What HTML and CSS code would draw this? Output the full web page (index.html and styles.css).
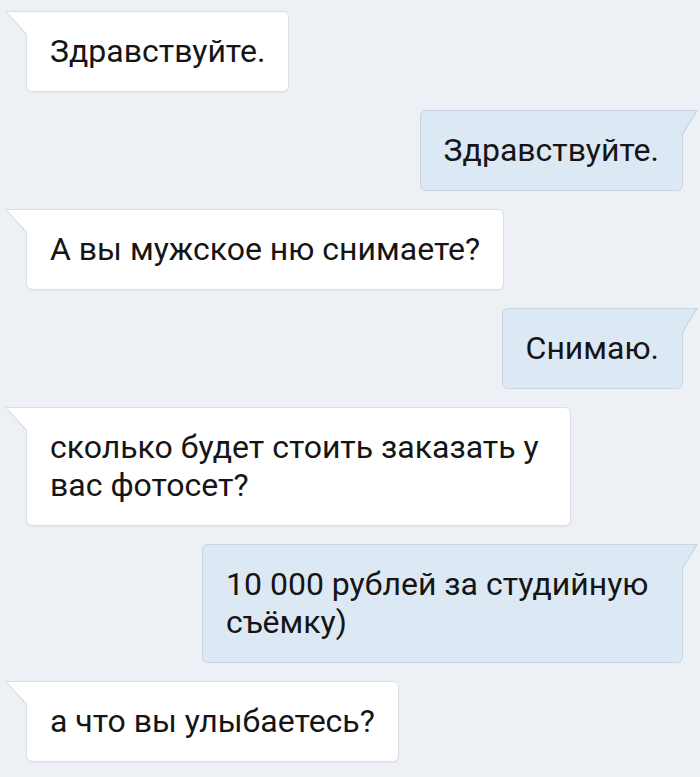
FILE: index.html
```html
<!DOCTYPE html>
<html lang="ru">
<head>
<meta charset="utf-8">
<link rel="stylesheet" href="styles.css">
</head>
<body>
<main class="chat">
  <div class="msg in">Здравствуйте.</div>
  <div class="msg out">Здравствуйте.</div>
  <div class="msg in">А вы мужское ню снимаете?</div>
  <div class="msg out">Снимаю.</div>
  <div class="msg in">сколько будет стоить заказать у вас фотосет?</div>
  <div class="msg out">10 000 рублей за студийную съёмку)</div>
  <div class="msg in">а что вы улыбаетесь?</div>
</main>
</body>
</html>
```
FILE: styles.css
```css
html, body {
  margin: 0;
  padding: 0;
  background: #edf0f4;
}
body {
  width: 700px;
  height: 777px;
  overflow: hidden;
  font-family: Roboto, "Noto Sans", sans-serif;
}
.chat {
  display: flex;
  flex-direction: column;
  gap: 18px;
  padding: 11px 17px 0 26px;
}
.msg {
  position: relative;
  box-sizing: border-box;
  padding: 20px 23px 21px 23px;
  font-size: 32px;
  line-height: 38px;
  color: #151515;
  border: 1px solid #d9dee5;
  border-radius: 6px;
  width: fit-content;
}
.msg.in {
  align-self: flex-start;
  background: #ffffff;
  border-top-left-radius: 0;
  max-width: 545px;
  box-shadow: 0 1px 1px rgba(0, 0, 0, 0.04);
}
.msg.out {
  align-self: flex-end;
  background: #dde8f5;
  border-color: #c9d5e4;
  border-top-right-radius: 0;
  max-width: 481px;
}
.msg::before,
.msg::after {
  content: "";
  position: absolute;
}
.msg.in::before {
  top: -1px;
  left: -22px;
  width: 22px;
  height: 25px;
  background: #d9dee5;
  clip-path: polygon(0 0, 100% 0, 100% 100%);
}
.msg.in::after {
  top: 0;
  left: -20px;
  width: 21px;
  height: 23px;
  background: #ffffff;
  clip-path: polygon(0 0, 100% 0, 100% 100%);
}
.msg.out::before {
  top: -1px;
  right: -16px;
  width: 16px;
  height: 26px;
  background: #c9d5e4;
  clip-path: polygon(0 0, 100% 0, 0 100%);
}
.msg.out::after {
  top: 0;
  right: -14px;
  width: 15px;
  height: 24px;
  background: #dde8f5;
  clip-path: polygon(0 0, 100% 0, 0 100%);
}
```
